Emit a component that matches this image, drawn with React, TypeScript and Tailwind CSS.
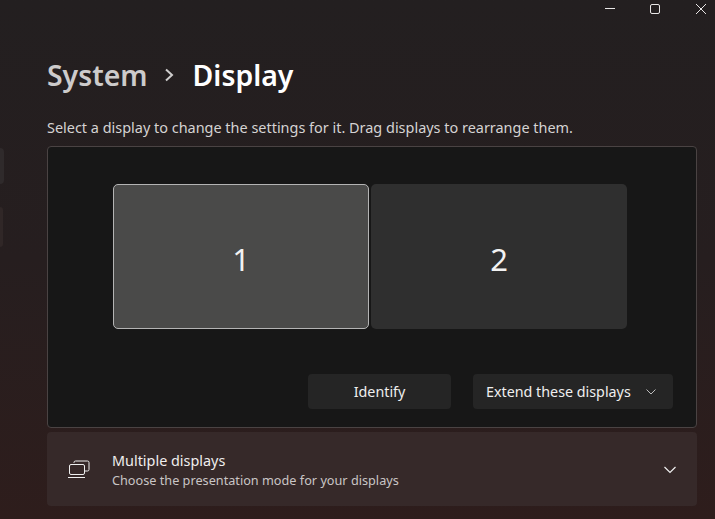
import React from "react";

const font = { fontFamily: '"Noto Sans", sans-serif' };

const WindowControls = () => (
  <div className="flex h-[18px] shrink-0 items-start justify-end text-[#e8e6e6]">
    <svg width="12" height="12" viewBox="0 0 12 12" className="mt-[3px]" fill="none" stroke="currentColor">
      <path d="M1 5.5h10" />
    </svg>
    <svg width="12" height="12" viewBox="0 0 12 12" className="ml-[33px] mt-[3px]" fill="none" stroke="currentColor">
      <rect x="1.5" y="1.5" width="9" height="9" rx="1.5" />
    </svg>
    <svg width="12" height="12" viewBox="0 0 12 12" className="ml-[34px] mr-[8px] mt-[3px]" fill="none" stroke="currentColor">
      <path d="M1 1l10 10M11 1L1 11" />
    </svg>
  </div>
);

const Monitor = ({ n, selected }: { n: string; selected?: boolean }) => (
  <div
    className={`flex h-[145px] w-[256px] items-center justify-center rounded-[5px] pt-[6px] text-[31px] text-[#f2f2f2] ${
      selected ? "border border-[#b4b4b4] bg-[#4a4a49]" : "bg-[#2f2f2f]"
    }`}
  >
    {n}
  </div>
);

export default function App() {
  return (
    <div
      className="flex h-[519px] w-[715px] overflow-hidden bg-gradient-to-b from-[#231f20] via-[#261e1f] to-[#2e1d1c]"
      style={font}
    >
      <div className="flex w-[47px] shrink-0 flex-col pt-[148px]">
        <div className="h-[36px] w-[4px] rounded-r-[4px] bg-[#2f2a2b]" />
        <div className="mt-[23px] h-[40px] w-[3px] rounded-r-[4px] bg-[#302727]" />
      </div>
      <div className="flex min-w-0 flex-1 flex-col">
        <WindowControls />
        <div className="mt-[35px] flex h-[44px] items-center pr-[18px] text-[28.4px] font-semibold leading-[44px]">
          <span className="text-[#cdcbcb]">System</span>
          <svg width="13" height="14" viewBox="0 0 13 14" className="ml-[15px] mr-[17px]" fill="none" stroke="#cfcdcd" strokeWidth="2">
            <path d="M3 1.5L9 7l-6 5.5" />
          </svg>
          <span className="text-white">Display</span>
        </div>
        <p className="mt-[21px] text-[14.45px] leading-[20px] text-[#d5d3d3]">
          Select a display to change the settings for it. Drag displays to rearrange them.
        </p>
        <div className="mt-[8px] mr-[18px] flex h-[282px] flex-col rounded-[4px] border border-[#4a4343] bg-[#171717] pl-[65px] pt-[37px]">
          <div className="flex gap-[2px]">
            <Monitor n="1" selected />
            <Monitor n="2" />
          </div>
          <div className="mt-[45px] flex justify-end gap-[22px] pr-[23px] text-[14.3px] text-[#efefef]">
            <div className="flex h-[35px] w-[143px] items-center justify-center rounded-[4px] bg-[#252525]">Identify</div>
            <div className="flex h-[35px] w-[200px] items-center justify-between rounded-[4px] bg-[#252525] pl-[13px] pr-[17px]">
              <span>Extend these displays</span>
              <svg width="10" height="6" viewBox="0 0 10 6" fill="none" stroke="#bdbdbd">
                <path d="M.5.5L5 5 9.5.5" />
              </svg>
            </div>
          </div>
        </div>
        <div className="mt-[4px] mr-[18px] flex h-[74px] items-center rounded-[4px] bg-[#362929] pl-[21px] pr-[21px]">
          <svg width="22" height="18" viewBox="0 0 22 18" fill="none" stroke="#efefef" className="mb-[1px] shrink-0">
            <path d="M6 3V2.5A1.5 1.5 0 0 1 7.5 1h12A1.5 1.5 0 0 1 21 2.5v7a1.5 1.5 0 0 1-1.5 1.5H17" />
            <rect x="1.5" y="4.5" width="15" height="10" rx="1.5" />
            <path d="M0 17.5h17" />
          </svg>
          <div className="ml-[22px] flex flex-1 flex-col pt-[3px]">
            <span className="text-[14.4px] leading-[20px] text-[#f0eeee]">Multiple displays</span>
            <span className="text-[12.7px] leading-[19px] text-[#c9c5c5]">Choose the presentation mode for your displays</span>
          </div>
          <svg width="12" height="8" viewBox="0 0 12 8" fill="none" stroke="#efefef" strokeWidth="1.2" className="mt-[1px]">
            <path d="M.5 1L6 6.5 11.5 1" />
          </svg>
        </div>
      </div>
    </div>
  );
}
